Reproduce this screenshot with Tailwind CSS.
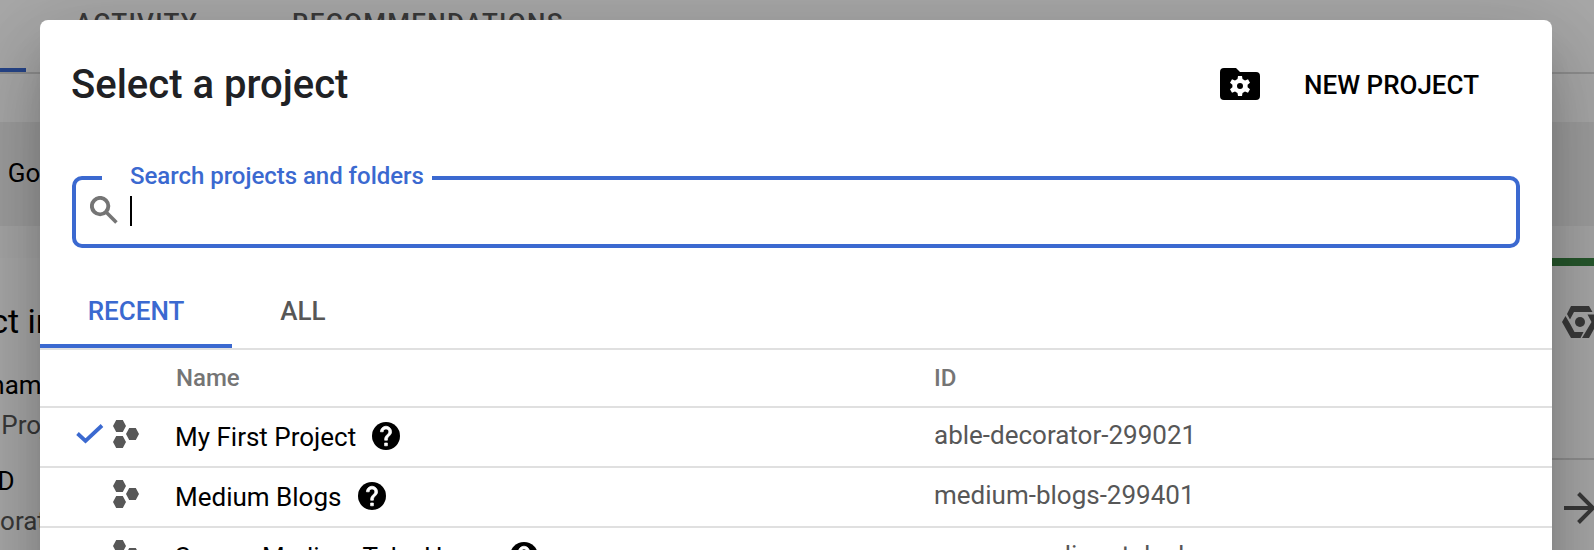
<!DOCTYPE html>
<html lang="en">
<head>
<meta charset="utf-8">
<title>Select a project</title>
<script src="https://cdn.jsdelivr.net/npm/@tailwindcss/browser@4"></script>
</head>
<body class="relative h-[550px] w-[1594px] overflow-hidden bg-white font-[Roboto,'Noto_Sans',sans-serif] text-[26px] leading-8 text-black">
<svg class="hidden">
  <symbol id="hex" viewBox="0 0 26 28">
    <path fill="#575757" d="M3.200 0h6.600L13 6l-3.200 6H3.200L0 6zM3.200 16h6.600L13 22l-3.200 6H3.200L0 22zM16.200 8h6.600L26 14l-3.200 6h-6.600L13 14z"/>
  </symbol>
  <symbol id="help" viewBox="2 2 20 20">
    <circle cx="12" cy="12" r="10"/>
    <path fill="#fff" stroke="#fff" stroke-width=".5" stroke-linejoin="round" d="M13 19h-2v-2h2zM15.070 11.250l-.9.920C13.450 12.900 13 13.500 13 15h-2v-.5c0-1.100.45-2.100 1.170-2.830l1.240-1.260c.37-.36.59-.86.59-1.410 0-1.100-.9-2-2-2s-2 .9-2 2H8c0-2.210 1.790-4 4-4s4 1.790 4 4c0 .88-.36 1.680-.93 2.250z"/>
  </symbol>
</svg>

<!-- Dashboard behind the dialog -->
<div class="flex h-[550px] flex-col overflow-hidden">
  <nav class="flex h-[74px] shrink-0 border-b-2 border-[#dadada] font-medium tracking-[1.3px] text-[#575757]">
    <div class="w-[26px] self-end border-b-4 border-[#3b69d0]"></div>
    <span class="ml-[49px] mt-[7px] w-[217px]">ACTIVITY</span>
    <span class="mt-[7px]">RECOMMENDATIONS</span>
  </nav>
  <div class="h-12 shrink-0"></div>
  <div class="h-[104px] shrink-0 whitespace-nowrap bg-[#f0f0f0] pt-[35px]"><span class="-ml-[13px] [word-spacing:2px]">y Google Cloud</span></div>
  <div class="h-8 shrink-0 bg-[#fcfcfc]"></div>
  <div class="flex grow justify-between">
    <section class="flex w-[400px] flex-col whitespace-nowrap">
      <h2 class="-ml-[88px] mt-[43px] text-[34px] leading-10">Project info</h2>
      <span class="-ml-[98px] mt-7">Project name</span>
      <span class="-ml-[98px] mt-2 text-[#575757]">My First Project</span>
      <span class="-ml-[98px] mt-6">Project ID</span>
      <span class="-ml-[98px] mt-2 text-[#575757]">able-decorator-299021</span>
    </section>
    <section class="flex w-[60px] flex-col border-t-8 border-[#3a8443] text-[#575757]">
      <div class="flex h-[194px] shrink-0 overflow-hidden border-b-2 border-[#dadada] pl-[28px] pt-10">
        <svg class="h-8 w-9 shrink-0" viewBox="0 0 36 32" fill="currentColor"><path d="M9 0h18l3.500 6H12L8 13.500 5 8zM3.500 10l5 8.500 4 7.500h9l-3 6H9L0 16zM25.500 8.500H32l4 7.500-9 16h-7l9.500-16z"/><circle cx="18" cy="16" r="5"/></svg>
      </div>
      <div class="flex pl-[30px] pt-[32px]">
        <svg class="h-8 w-8 shrink-0" viewBox="0 0 32 32" fill="none" stroke="currentColor" stroke-width="4"><path d="M0 16h29M14.500 1.500L29 16 14.500 30.500"/></svg>
      </div>
    </section>
  </div>
</div>
<div class="absolute inset-0 bg-black/34"></div>

<!-- Project picker dialog -->
<main class="absolute left-10 top-5 flex h-[900px] w-[1512px] flex-col rounded-lg bg-white shadow-[0_22px_30px_-14px_rgba(0,0,0,0.2),0_48px_76px_6px_rgba(0,0,0,0.14),0_18px_92px_16px_rgba(0,0,0,0.12)]">
  <header class="flex h-32 shrink-0 items-center justify-between pl-[31px] pr-[73px]">
    <h1 class="mt-px text-[40px] font-medium leading-12 text-[#202124]">Select a project</h1>
    <button class="flex items-center gap-11 font-medium">
      <svg class="h-8 w-10" viewBox="0 0 40 32"><path d="M4 0h12l4 4h16a4 4 0 0 1 4 4v20a4 4 0 0 1-4 4H4a4 4 0 0 1-4-4V4a4 4 0 0 1 4-4z"/><path transform="translate(8 6)" fill="#fff" fill-rule="evenodd" d="M10 2h4l.5 3 2.500 1.500 3-1.200 2 3.500-2.400 2v2.400l2.400 2-2 3.500-3-1.200-2.500 1.500-.5 3h-4l-.5-3L7 17.500l-3 1.200-2-3.500 2.400-2v-2.400l-2.400-2 2-3.500 3 1.200L9.500 5zM12 9a3 3 0 1 0 0 6 3 3 0 0 0 0-6z"/></svg>
      <span class="mt-0.5">NEW PROJECT</span>
    </button>
  </header>

  <div class="mx-8 mt-7 flex h-[72px] shrink-0">
    <div class="relative flex w-full items-center rounded-[10px] border-4 border-[#3b69d0] pl-3.5">
      <svg class="-mt-1 h-7 w-7" viewBox="3 3 18 18" fill="none" stroke="#757575"><circle cx="9.500" cy="9.500" r="5.300" stroke-width="2.500"/><path stroke-width="2.300" d="M13.300 13.300l6.700 6.700"/></svg>
      <div class="-mt-0.5 ml-3 h-[30px] w-0.5 bg-black"></div>
      <label class="absolute -top-5 left-[26px] w-[330px] bg-white pl-7 text-2xl font-medium leading-8 tracking-[-0.03px] text-[#3b69d0]">Search projects and folders</label>
    </div>
  </div>

  <div class="mt-[22px] flex h-20 shrink-0 border-b-2 border-[#e0e0e0] font-medium">
    <button class="w-48 border-b-4 border-[#3b69d0] pt-2 text-[#3b69d0]">RECENT</button>
    <button class="w-[142px] border-b-4 border-transparent pt-2 text-[#575757]">ALL</button>
  </div>

  <div class="grid h-[58px] shrink-0 grid-cols-[136px_758px_1fr] items-center border-b-2 border-[#e0e0e0] text-2xl font-medium text-[#757575]">
    <span></span><span>Name</span><span>ID</span>
  </div>
  <div class="grid h-[60px] shrink-0 grid-cols-[73px_62px_759px_1fr] items-center border-b-2 border-[#e0e0e0]">
    <svg class="-mt-1.5 ml-9 h-5 w-7" viewBox="0 0 28 20" fill="none" stroke="#3b69d0" stroke-width="3.800"><path d="M1.500 9.500L9.500 17 26 1.500"/></svg>
    <svg class="-mt-1.5 h-7 w-[26px]"><use href="#hex"/></svg>
    <div class="flex items-center gap-4"><span>My First Project</span><svg class="-mt-0.5 h-7 w-7"><use href="#help"/></svg></div>
    <span class="-mt-1 text-[#575757]">able-decorator-299021</span>
  </div>
  <div class="grid h-[60px] shrink-0 grid-cols-[73px_62px_759px_1fr] items-center border-b-2 border-[#e0e0e0]">
    <span></span>
    <svg class="-mt-1.5 h-7 w-[26px]"><use href="#hex"/></svg>
    <div class="flex items-center gap-[17px]"><span>Medium Blogs</span><svg class="-mt-0.5 h-7 w-7"><use href="#help"/></svg></div>
    <span class="-mt-1 text-[#575757]">medium-blogs-299401</span>
  </div>
  <div class="grid h-[60px] shrink-0 grid-cols-[73px_62px_759px_1fr] items-center border-b-2 border-[#e0e0e0]">
    <span></span>
    <svg class="-mt-1.5 h-7 w-[26px]"><use href="#hex"/></svg>
    <div class="flex items-center gap-4"><span>Source Medium Take Home</span><svg class="-mt-0.5 h-7 w-7"><use href="#help"/></svg></div>
    <span class="-mt-1 text-[#575757]">source-medium-take-home</span>
  </div>
</main>
</body>
</html>
